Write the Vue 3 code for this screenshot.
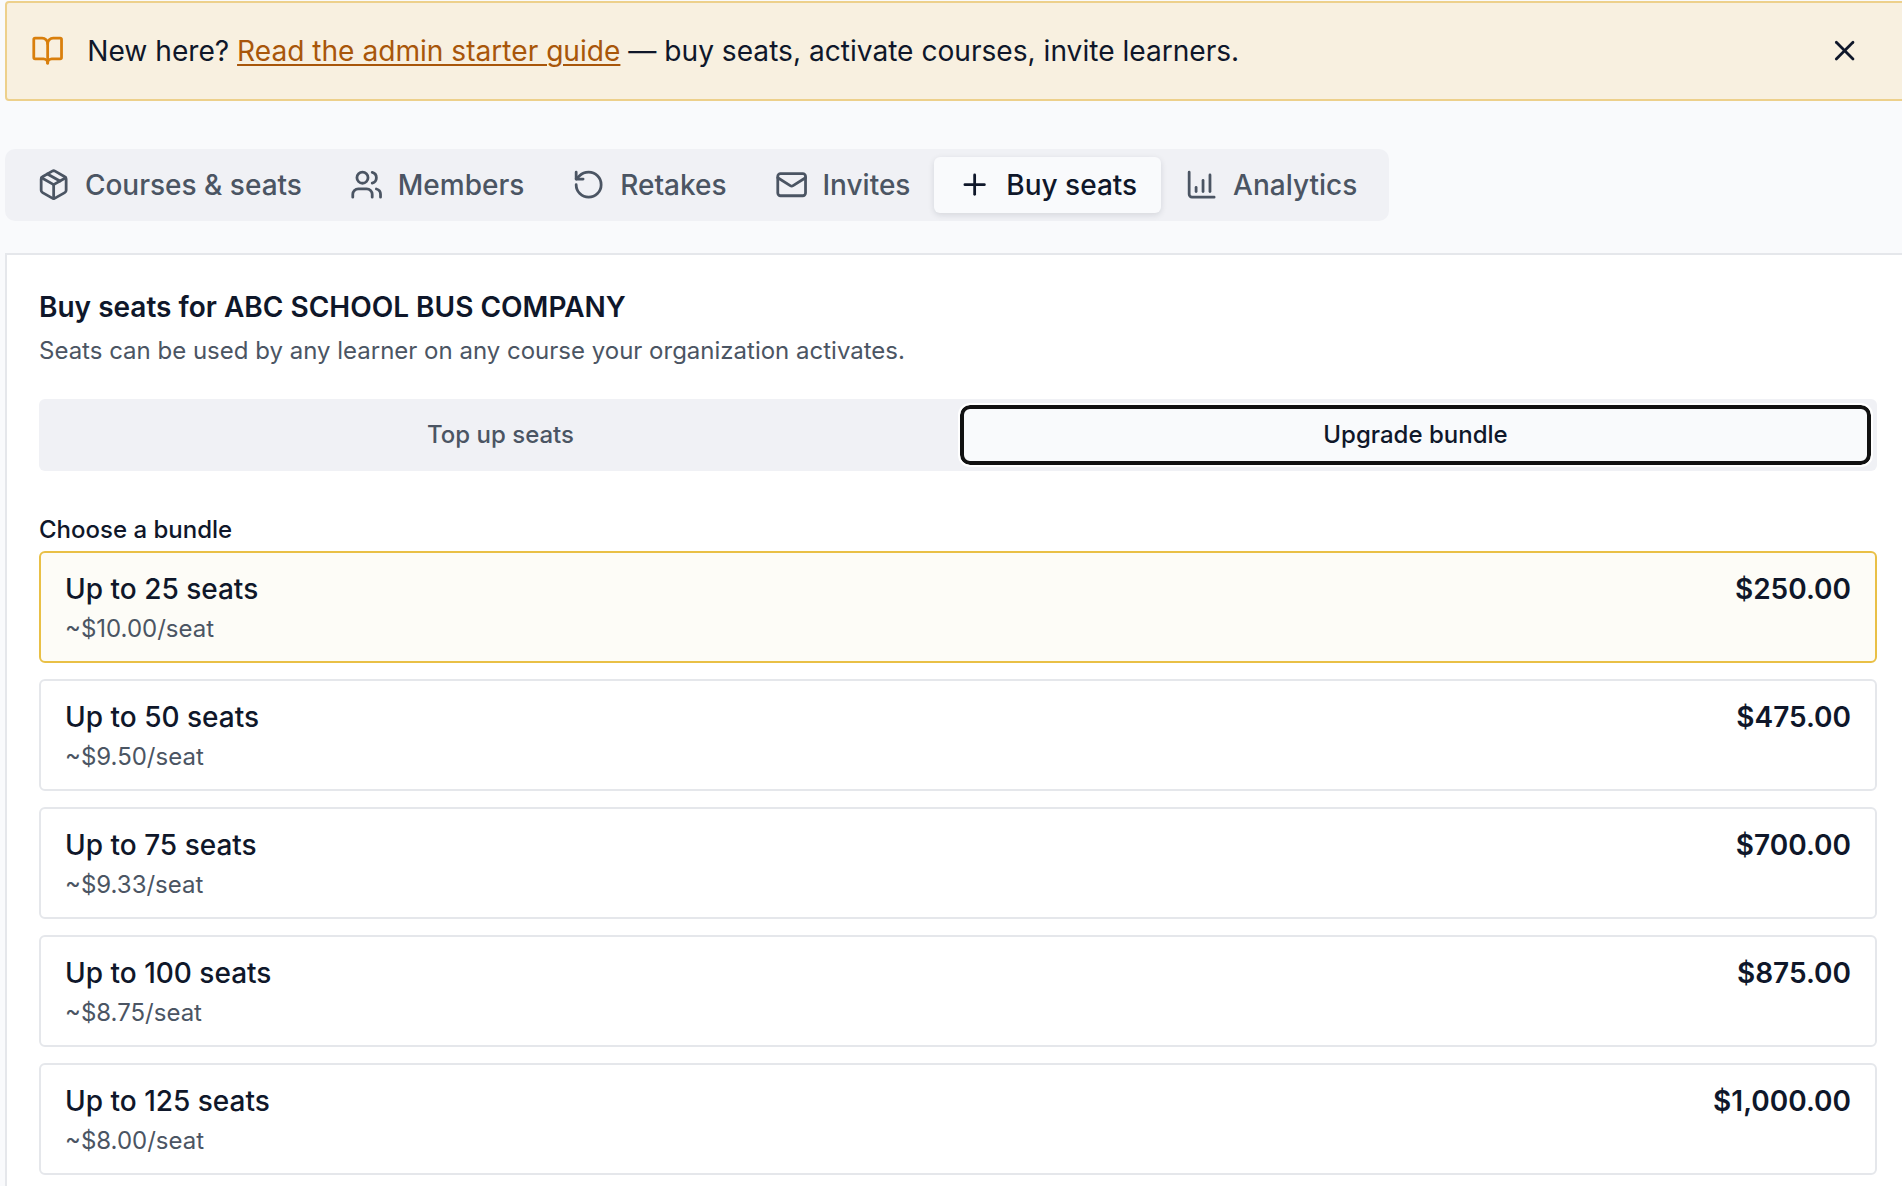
<script setup>
const tabs = [
  { label: 'Courses & seats', icon: 'package' },
  { label: 'Members', icon: 'users' },
  { label: 'Retakes', icon: 'retake' },
  { label: 'Invites', icon: 'mail' },
  { label: 'Buy seats', icon: 'plus', active: true },
  { label: 'Analytics', icon: 'chart' }
]
const bundles = [
  { title: 'Up to 25 seats', sub: '~$10.00/seat', price: '$250.00', selected: true },
  { title: 'Up to 50 seats', sub: '~$9.50/seat', price: '$475.00' },
  { title: 'Up to 75 seats', sub: '~$9.33/seat', price: '$700.00' },
  { title: 'Up to 100 seats', sub: '~$8.75/seat', price: '$875.00' },
  { title: 'Up to 125 seats', sub: '~$8.00/seat', price: '$1,000.00' }
]
</script>

<template>
  <div class="page">
    <div class="inner">
      <div class="banner">
        <svg class="icon book" viewBox="0 0 24 24">
          <path d="M12 7v14" />
          <path d="M3 18a1 1 0 0 1-1-1V4a1 1 0 0 1 1-1h5a4 4 0 0 1 4 4 4 4 0 0 1 4-4h5a1 1 0 0 1 1 1v13a1 1 0 0 1-1 1h-6a3 3 0 0 0-3 3 3 3 0 0 0-3-3z" />
        </svg>
        <p class="banner-text">New here? <a class="link">Read the admin starter guide</a> — buy seats, activate courses, invite learners.</p>
        <svg class="icon close" viewBox="0 0 24 24">
          <path d="M18 6 6 18" />
          <path d="m6 6 12 12" />
        </svg>
      </div>

      <div class="tabs">
        <div v-for="t in tabs" :key="t.label" class="tab" :class="{ active: t.active }">
          <svg class="icon" viewBox="0 0 24 24">
            <template v-if="t.icon === 'package'">
              <path d="M11 21.73a2 2 0 0 0 2 0l7-4A2 2 0 0 0 21 16V8a2 2 0 0 0-1-1.73l-7-4a2 2 0 0 0-2 0l-7 4A2 2 0 0 0 3 8v8a2 2 0 0 0 1 1.73z" />
              <path d="M12 22V12" />
              <path d="M3.29 7 12 12l8.71-5" />
              <path d="m7.5 4.27 9 5.15" />
            </template>
            <template v-else-if="t.icon === 'users'">
              <path d="M16 21v-2a4 4 0 0 0-4-4H6a4 4 0 0 0-4 4v2" />
              <circle cx="9" cy="7" r="4" />
              <path d="M22 21v-2a4 4 0 0 0-3-3.87" />
              <path d="M16 3.13a4 4 0 0 1 0 7.75" />
            </template>
            <template v-else-if="t.icon === 'retake'">
              <path d="M3 12a9 9 0 1 0 9-9 9.75 9.75 0 0 0-6.74 2.74L3 8" />
              <path d="M3 3v5h5" />
            </template>
            <template v-else-if="t.icon === 'mail'">
              <rect x="2" y="4" width="20" height="16" rx="2" />
              <path d="m22 7-8.97 5.7a1.94 1.94 0 0 1-2.06 0L2 7" />
            </template>
            <template v-else-if="t.icon === 'plus'">
              <path d="M5 12h14" />
              <path d="M12 5v14" />
            </template>
            <template v-else>
              <path d="M3 3v16a2 2 0 0 0 2 2h16" />
              <path d="M13 17V9" />
              <path d="M18 17V5" />
              <path d="M8 17v-3" />
            </template>
          </svg>
          <span>{{ t.label }}</span>
        </div>
      </div>

      <section class="panel">
        <h2 class="title">Buy seats for ABC SCHOOL BUS COMPANY</h2>
        <p class="subtitle">Seats can be used by any learner on any course your organization activates.</p>

        <div class="segment">
          <div class="seg-item plain">Top up seats</div>
          <div class="seg-item focused">Upgrade bundle</div>
        </div>

        <div class="label">Choose a bundle</div>
        <div class="list">
          <div v-for="b in bundles" :key="b.title" class="bundle" :class="{ selected: b.selected }">
            <div>
              <div class="b-title">{{ b.title }}</div>
              <div class="b-sub">{{ b.sub }}</div>
            </div>
            <div class="b-price">{{ b.price }}</div>
          </div>
        </div>
      </section>
    </div>
  </div>
</template>

<style>
html, body { margin: 0; background: #f9fafc; overflow: hidden; }
</style>

<style scoped>
.page {
  width: 1902px;
  height: 1186px;
  overflow: hidden;
  padding: 1px 0 0 5px;
  box-sizing: border-box;
  font-family: Inter, "Noto Sans", sans-serif;
  color: #0f172a;
}
.inner { width: 1904px; }
.icon {
  width: 33.3px;
  height: 33.3px;
  flex: none;
  fill: none;
  stroke: currentColor;
  stroke-width: 2;
  stroke-linecap: round;
  stroke-linejoin: round;
}
.banner {
  display: flex;
  align-items: center;
  height: 100px;
  box-sizing: border-box;
  padding: 0 46px 0 24px;
  border: 2px solid #edd08b;
  border-radius: 4px;
  background: #f8f0e0;
}
.book { color: #d97f0c; margin-right: 23px; }
.banner-text { flex: 1; margin: 0; font-size: 28.12px; }
.link { color: #a8560a; text-decoration: underline; text-decoration-thickness: 2px; text-underline-offset: 3px; }
.close { color: #0f172a; }
.tabs {
  display: inline-flex;
  margin-top: 48px;
  padding: 8px;
  border-radius: 10px;
  background: #f0f1f5;
  vertical-align: top;
}
.tab {
  display: flex;
  align-items: center;
  gap: 14.6px;
  height: 56px;
  padding: 0 24px;
  border-radius: 6px;
  font-size: 28px;
  font-weight: 500;
  color: #4b5563;
}
.tab.active {
  background: #f9fafc;
  color: #0f172a;
  box-shadow: 0 2px 6px rgba(15, 23, 42, 0.12);
}
.panel {
  margin-top: 32px;
  padding: 32px;
  border: 2px solid #e5e7eb;
  border-bottom: 0;
  border-right: 0;
  background: #fff;
  height: 1000px;
}
.title { margin: 0; font-size: 28px; font-weight: 600; line-height: 40px; }
.subtitle { margin: 4px 0 0; font-size: 24px; line-height: 40px; color: #4b5563; }
.segment {
  display: grid;
  grid-template-columns: 1fr 1fr;
  gap: 4px;
  margin-top: 28px;
  padding: 6px;
  border-radius: 6px;
  background: #f0f1f5;
}
.seg-item {
  display: flex;
  align-items: center;
  justify-content: center;
  height: 60px;
  box-sizing: border-box;
  border-radius: 10px;
  font-size: 24px;
  font-weight: 500;
  color: #4b5563;
}
.plain { padding-bottom: 2px; }
.focused {
  padding-bottom: 2px;
  border: 4px solid #111;
  outline: 2px solid #fff;
  background: #f9fafc;
  color: #0f172a;
}
.label { margin-top: 39px; font-size: 24px; font-weight: 500; line-height: 40px; }
.list { display: flex; flex-direction: column; gap: 16px; margin-top: 1px; }
.bundle {
  display: flex;
  justify-content: space-between;
  height: 112px;
  box-sizing: border-box;
  padding: 16px 24px;
  border: 2px solid #e5e7eb;
  border-radius: 6px;
}
.selected { border-color: #e9c046; background: #fdfcf7; }
.b-title { font-size: 28px; font-weight: 500; line-height: 40px; }
.b-sub { font-size: 24px; line-height: 40px; color: #4b5563; }
.b-price { font-size: 28px; font-weight: 600; line-height: 40px; }
</style>
